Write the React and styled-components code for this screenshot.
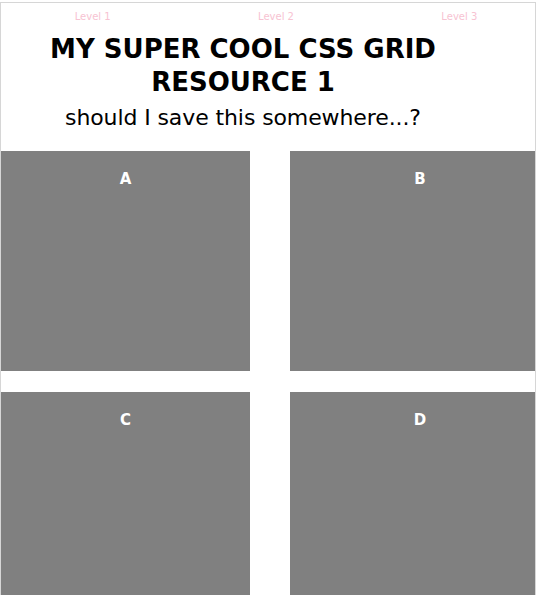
import React from 'react'
import styled, { createGlobalStyle } from 'styled-components'

const Global = createGlobalStyle`
    html, body {
        margin: 0;
        padding: 0;
        background: #fff;
        overflow: hidden;
    }
    body {
        font-family: "DejaVu Sans", "Open Sans", sans-serif;
    }
`

const Frame = styled.div`
    margin-top: 2px;
    width: 534px;
    height: 593px;
    border: 1px solid #d6d6d6;
    border-bottom: none;
    overflow: hidden;
`

const Nav = styled.nav`
    width: 550px;
    display: flex;
    justify-content: space-around;
    padding-top: 8px;
`

const NavLink = styled.a`
    color: #f7c3d2;
    font-size: 10px;
    text-decoration: none;
    line-height: 12px;
`

const Header = styled.header`
    width: 484px;
    text-align: center;
`

const Title = styled.h1`
    margin: 10px 0 0;
    font-size: 26px;
    line-height: 33px;
    font-weight: 700;
    text-transform: uppercase;
    color: #000;
`

const Sub = styled.p`
    margin: 3px 0 0;
    font-size: 22px;
    line-height: 32px;
    letter-spacing: -0.1px;
    color: #000;
`

const Grid = styled.section`
    margin-top: 17px;
    display: grid;
    grid-template-columns: 249px 260px;
    grid-auto-rows: 220px;
    column-gap: 40px;
    row-gap: 21px;
`

const Cell = styled.div`
    background: #808080;
    color: #fff;
    font-weight: 700;
    font-size: 15px;
    text-align: center;
    padding-top: 19px;
`

const App = () => (
    <>
        <Global />
        <Frame>
            <Nav>
                <NavLink href="#">Level 1</NavLink>
                <NavLink href="#">Level 2</NavLink>
                <NavLink href="#">Level 3</NavLink>
            </Nav>
            <Header>
                <Title>My super cool CSS grid<br />resource 1</Title>
                <Sub>should I save this somewhere...?</Sub>
            </Header>
            <Grid>
                {['A', 'B', 'C', 'D'].map(l => <Cell key={l}>{l}</Cell>)}
            </Grid>
        </Frame>
    </>
)

export default App
